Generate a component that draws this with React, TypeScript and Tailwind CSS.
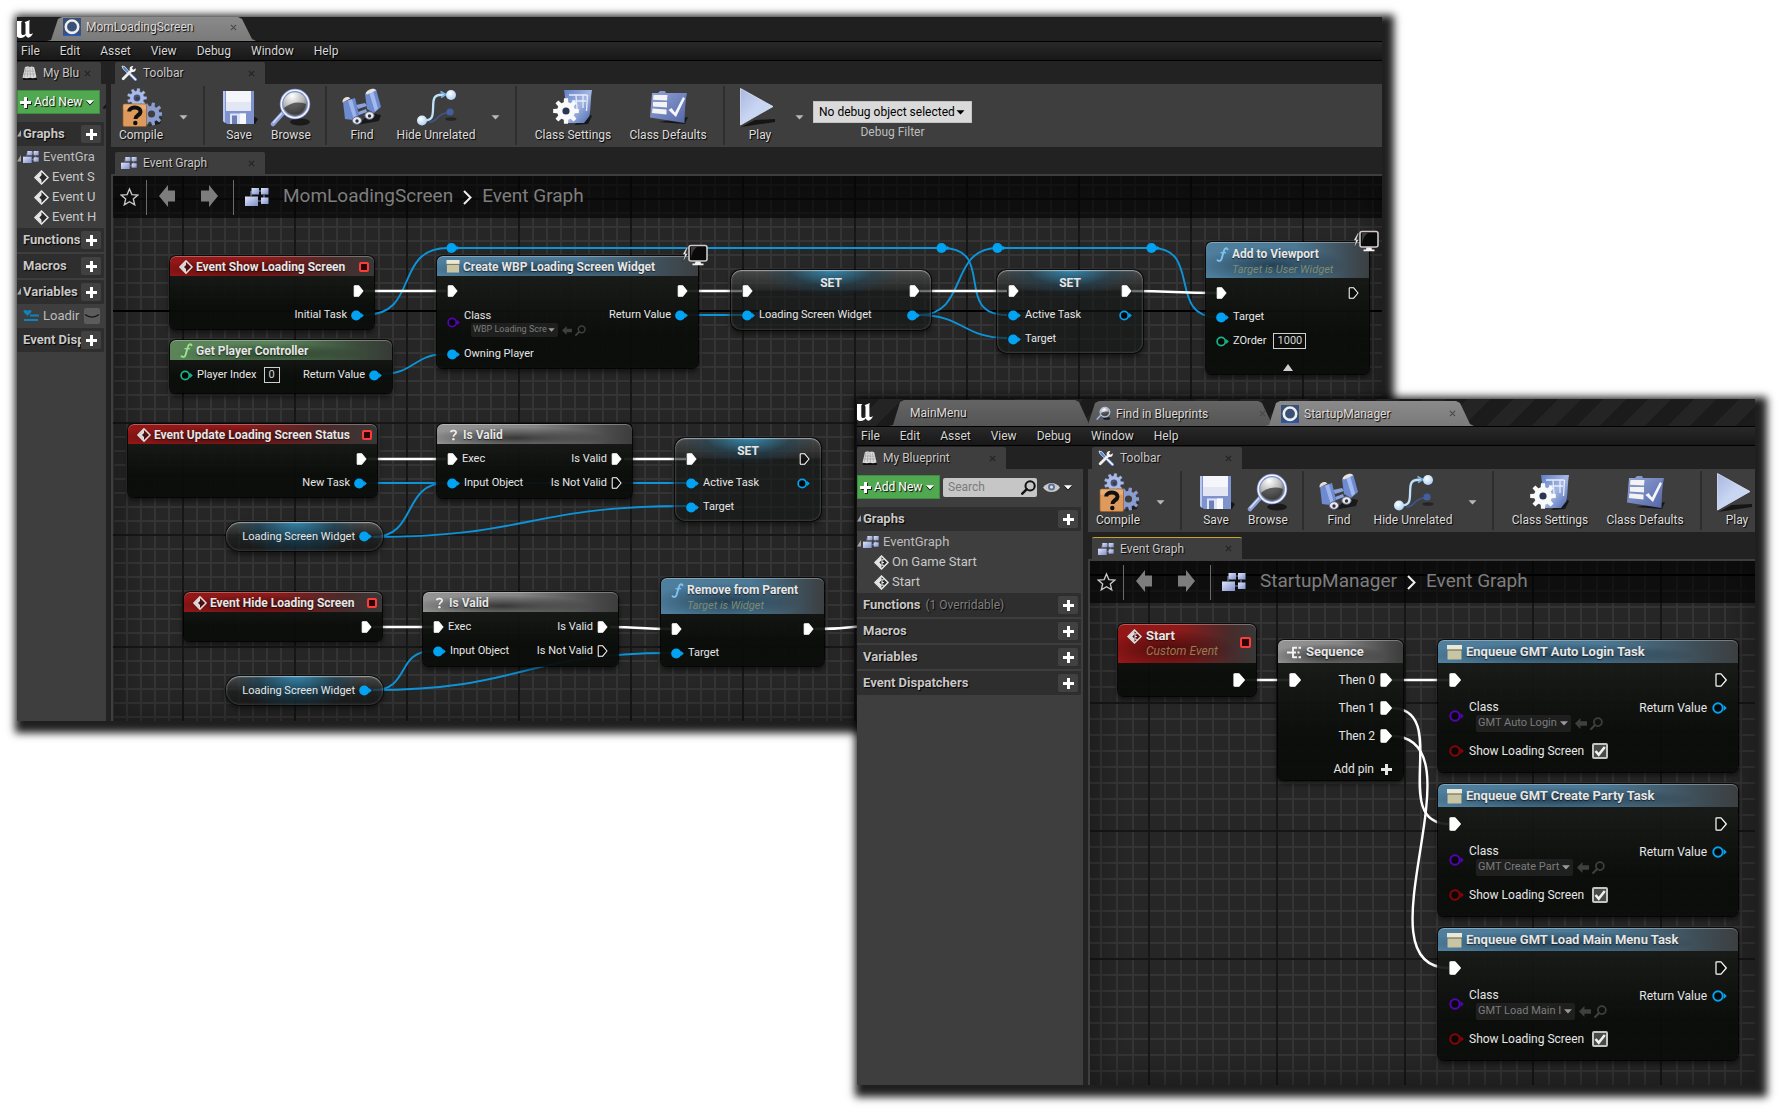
import React, { useId } from "react";

type IconProps = { className?: string };

/* ---------- small glyphs ---------- */

function UnrealMark() {
  return (
    <svg viewBox="0 0 17 19" className="h-[19px] w-[17px] shrink-0" fill="#fff" aria-hidden="true">
      <path d="M0 1h5.600c-1 .5-1.300 1-1.300 2v9.400c0 1.800.6 2.600 1.900 2.600.9 0 1.700-.4 2.300-1V4.200c0-1-.3-1.600-1.100-2L13 0c-.4.5-.6 1.300-.6 2.300v10.200c0 1.100.4 1.600 1.200 1.600.7 0 1.400-.4 2.500-1.400-1 3-2.800 4.500-5 5-1.200-.5-2-1.300-2.400-2.400-1.200 1.800-2.700 2.700-4.800 2.700-1.500 0-2.900-.5-3.900-1.500z" />
    </svg>
  );
}

function CloseGlyph({ className = "" }: IconProps) {
  return (
    <svg viewBox="0 0 8 8" className={`h-[7px] w-[7px] shrink-0 ${className}`} aria-hidden="true">
      <path d="M1 1l6 6M7 1l-6 6" stroke="currentColor" strokeWidth="1.300" />
    </svg>
  );
}

function Caret({ className = "" }: IconProps) {
  return (
    <svg viewBox="0 0 8 5" className={`shrink-0 ${className}`} aria-hidden="true">
      <path d="M0 .3h8L4 4.600z" fill="currentColor" />
    </svg>
  );
}

function Plus({ className = "" }: IconProps) {
  return (
    <svg viewBox="0 0 11 11" className={`h-[11px] w-[11px] shrink-0 ${className}`} aria-hidden="true">
      <path d="M4 0h3v4h4v3H7v4H4V7H0V4h4z" fill="currentColor" />
    </svg>
  );
}

function RingIcon() {
  return (
    <svg viewBox="0 0 18 18" className="h-[18px] w-[18px] shrink-0" aria-hidden="true">
      <rect width="18" height="18" fill="#3a5077" />
      <rect y="16.500" width="18" height="1.500" fill="#2459c9" />
      <circle cx="9" cy="8.700" r="6.200" fill="none" stroke="#eee" strokeWidth="2.600" />
    </svg>
  );
}

function BookIcon() {
  return (
    <svg viewBox="0 0 15 14" className="h-[14px] w-[15px] shrink-0" aria-hidden="true">
      <path d="M1 12h14v2H1z" fill="#111" />
      <path d="M3 1l3-.7 1.500.7L10 .5l2.200.7L14.500 11.500l-3.500.8-3-.6-3 .6-4.500-.5z" fill="#dadada" />
      <path d="M3.800 1.500L2.500 11M6 1l-.5 10M8 1.500l.5 10M10.500 1.500l1 9.500M2.500 5l10 .2M2 8h11" stroke="#9a9a9a" strokeWidth=".6" />
    </svg>
  );
}

function ToolsIcon() {
  return (
    <svg viewBox="0 0 16 16" className="h-[16px] w-[16px] shrink-0" aria-hidden="true">
      <path d="M1 1l3 .8 5 6-1.500 1.500-5.500-5.500z" fill="#4f7fd6" stroke="#fff" strokeWidth=".7" />
      <path d="M9.500 9.500l5 5" stroke="#6d98e6" strokeWidth="3" strokeLinecap="round" />
      <path d="M9.500 9.500l5 5" stroke="#fff" strokeWidth="1.500" strokeLinecap="round" />
      <path d="M2.200 13.800l7.300-7.300" stroke="#efefef" strokeWidth="2.800" strokeLinecap="round" />
      <path d="M14.800 3.200l-2.300 1.600-1.500-1.200 1.300-2.600c-2.200-.3-4 1-3.700 3.500.2 1.700 1.600 2.800 3.300 2.600 2-.2 3.200-1.700 2.900-3.900z" fill="#f4f4f4" />
    </svg>
  );
}

function GraphIcon({ className = "" }: IconProps) {
  return (
    <svg viewBox="0 0 24 20" className={`shrink-0 ${className}`} aria-hidden="true">
      <defs>
        <linearGradient id="gi" x1="0" y1="0" x2="1" y2="1">
          <stop offset="0" stopColor="#dfe6fb" />
          <stop offset="1" stopColor="#7f8fcb" />
        </linearGradient>
      </defs>
      <path d="M6 9V4M16 4h-3M19 8v5M13 14h4" stroke="#7a86b5" strokeWidth="1.200" fill="none" />
      <rect x="6.500" y="1" width="7.500" height="6.500" fill="url(#gi)" />
      <rect x="16" y="1" width="7.500" height="6.500" fill="url(#gi)" />
      <rect x="0" y="9.500" width="13" height="9.500" fill="url(#gi)" />
      <rect x="16" y="10.500" width="7.500" height="6.500" fill="url(#gi)" />
    </svg>
  );
}

function EventDiamond({ custom = false, size = "h-[14px] w-[14px]", tint = "#ddd" }: { custom?: boolean; size?: string; tint?: string }) {
  return (
    <svg viewBox="0 0 14 14" className={`shrink-0 ${size}`} aria-hidden="true">
      <path d="M7 .9L13.100 7 7 13.100.9 7z" fill="rgba(0,0,0,.35)" stroke={tint} strokeWidth="1.500" strokeLinejoin="round" />
      <path d="M7 1.500v3.500L5 7l2 2v3.500L1.500 7z" fill={tint} />
      {custom && <path d="M9.500 4.500H7.500v5h2M7.500 7h1.800" fill="none" stroke={tint} strokeWidth="1" />}
    </svg>
  );
}

function ClassBox({ className = "" }: IconProps) {
  return (
    <svg viewBox="0 0 15 15" className={`shrink-0 ${className}`} aria-hidden="true">
      <rect x="0" y="0" width="15" height="5" fill="#ebe8d3" />
      <rect x="0" y="4.500" width="15" height="1" fill="#5d5a48" />
      <rect x=".5" y="5.500" width="14" height="9" fill="#c9c4a2" />
    </svg>
  );
}

function FuncGlyph({ color }: { color: string }) {
  return (
    <svg viewBox="0 0 13 15" className="h-[15px] w-[13px] shrink-0" aria-hidden="true">
      <path d="M11.500 2.200C10.500.6 8.600 1 8 3.400L5.600 11.800C5 14 3.200 14.500 1.600 13.200" fill="none" stroke={color} strokeWidth="1.900" strokeLinecap="round" />
      <path d="M4.500 5.700h5.600" stroke={color} strokeWidth="1.300" />
    </svg>
  );
}

function QuestionGlyph() {
  return (
    <svg viewBox="0 0 9 13" className="h-[12px] w-[9px] shrink-0" aria-hidden="true">
      <path d="M1.500 3.600C1.600 1 7.400 1 7.300 3.900 7.200 5.900 4.400 5.800 4.400 8.300" fill="none" stroke="#eee" strokeWidth="1.900" />
      <circle cx="4.400" cy="11" r="1.300" fill="#eee" />
    </svg>
  );
}

function SequenceGlyph() {
  return (
    <svg viewBox="0 0 15 13" className="h-[13px] w-[15px] shrink-0" aria-hidden="true">
      <path d="M0 6.500h6M6 1v11M6 1.800h4M6 6.500h3M6 11.200h4M11.500 1.800H14M10.500 6.500h2M11.500 11.200H14" stroke="#f2f2f2" strokeWidth="1.900" fill="none" />
    </svg>
  );
}

function UseArrow({ className = "" }: IconProps) {
  return (
    <svg viewBox="0 0 11 10" className={`shrink-0 ${className}`} aria-hidden="true">
      <path d="M5 0v3h6v4H5v3L0 5z" fill="#3e3f3e" />
    </svg>
  );
}

function Loupe({ color, className = "" }: { color: string; className?: string }) {
  return (
    <svg viewBox="0 0 14 14" className={`shrink-0 ${className}`} aria-hidden="true">
      <circle cx="8.500" cy="5.500" r="4.300" fill="none" stroke={color} strokeWidth="1.900" />
      <path d="M5.400 8.600L1.200 12.800" stroke={color} strokeWidth="2.300" strokeLinecap="round" />
    </svg>
  );
}

function MonitorBadge() {
  return (
    <svg viewBox="0 0 26 22" className="absolute -top-[12px] -right-[10px] h-[22px] w-[26px]" aria-hidden="true">
      <path d="M4.800 3L.6 10.500h2.200L1 18l4.800-8.500H3.600L5.800 3z" fill="#eee" stroke="#111" strokeWidth=".4" />
      <rect x="7" y="1.500" width="18" height="15.500" rx="2" fill="#0a0a0a" stroke="#d2c8ca" strokeWidth="1.600" />
      <path d="M9 15c.5-6 3-10 6-12h-6z" fill="#3a3a3a" />
      <path d="M13.500 17.500h5l.5 2h2.500v1.800h-11v-1.800H13z" fill="#f3f3f3" />
    </svg>
  );
}

/* ---------- toolbar drawings ---------- */

function gear(cx: number, cy: number, inner: number, outer: number, teeth: number) {
  const pts: string[] = [];
  const step = (Math.PI * 2) / teeth;
  for (let i = 0; i < teeth; i++) {
    const a = i * step;
    const at = (r: number, t: number) => `${(cx + r * Math.cos(t)).toFixed(2)} ${(cy + r * Math.sin(t)).toFixed(2)}`;
    pts.push(at(inner, a - step * 0.32), at(outer, a - step * 0.2), at(outer, a + step * 0.2), at(inner, a + step * 0.32));
  }
  return `M${pts.join("L")}Z`;
}

const ICON = "h-[40px] w-[42px] shrink-0";

function CompileIcon() {
  return (
    <svg viewBox="0 0 42 40" className={ICON} aria-hidden="true">
      <path d="M28 38l12-2 2-7z" fill="#1d1d1d" />
      <path d={gear(31.5, 26, 8, 11.5, 9)} fill="#8b9cd0" />
      <circle cx="31.500" cy="26" r="3.600" fill="#3e3e3e" />
      <path d={gear(17, 10, 7, 9.8, 9)} fill="#a9bbe6" stroke="#7688c0" strokeWidth=".4" />
      <circle cx="17" cy="10" r="3.400" fill="#46527c" />
      <circle cx="17.500" cy="10.500" r="1.800" fill="#3e3e3e" />
      <rect x="3" y="16" width="23.500" height="22.500" rx="1.500" fill="#dd9a5c" stroke="#9a5f26" strokeWidth=".7" />
      <path d="M3.500 16.500h22.500v5H3.500z" fill="#ecbb88" opacity=".6" />
      <path d="M9.200 23.500c.2-5.500 11.600-5.500 11.300.4-.2 3.500-5 3.300-5 7" fill="none" stroke="#101010" strokeWidth="4" />
      <circle cx="15.300" cy="35" r="2.200" fill="#101010" />
    </svg>
  );
}

function SaveIcon() {
  return (
    <svg viewBox="0 0 42 40" className={ICON} aria-hidden="true">
      <path d="M8 36h29l3-5-3-2z" fill="#161616" />
      <path d="M5 3h31v33H9l-4-3z" fill="#7f93cf" />
      <path d="M5 3h2v32l-2-2z" fill="#b8c6ee" />
      <path d="M8 3h25v20H8z" fill="#f4f6fb" />
      <path d="M8 14h25v9H8z" fill="#e2e7f3" />
      <path d="M12 25.500h16V36H12z" fill="#dde4f5" />
      <path d="M14 27.500h5V36h-5z" fill="#6d7fb9" />
      <path d="M22 25.500h6V36h-6z" fill="#f8f9fd" />
    </svg>
  );
}

function Magnifier({ className }: { className: string }) {
  return (
    <svg viewBox="0 0 42 40" className={className} aria-hidden="true">
      <defs>
        <radialGradient id="lens" cx=".4" cy=".2" r=".8">
          <stop offset="0" stopColor="#fff" />
          <stop offset=".55" stopColor="#b5b5b5" />
          <stop offset="1" stopColor="#3b3b3b" />
        </radialGradient>
      </defs>
      <ellipse cx="30" cy="34" rx="10" ry="3.500" fill="#1a1a1a" />
      <path d="M13 25L3 36" stroke="#8da0d8" strokeWidth="4.500" strokeLinecap="round" />
      <path d="M12 25L3 35" stroke="#d9e2fa" strokeWidth="1.300" />
      <circle cx="25" cy="16" r="13.500" fill="url(#lens)" stroke="#7d91c9" strokeWidth="3.500" />
      <circle cx="25" cy="16" r="13.700" fill="none" stroke="#f1f4fc" strokeWidth="1.600" />
      <path d="M14 20c6-5 14-7 22-4-1 6-5 10.500-11 10.500-5 0-9-2.500-11-6.500z" fill="#2e2e2e" opacity=".7" />
    </svg>
  );
}

function FindIcon() {
  return (
    <svg viewBox="0 0 42 40" className={ICON} aria-hidden="true">
      <path d="M16 37l22-4 2-6-10-2z" fill="#191919" />
      <path d="M15 17l9-2 2 3-9 3zM17 24l8-3 1 3-8 3z" fill="#8aa2dc" />
      <path d="M2 14l12-4 4 17-6 5-8-1z" fill="#6e8bd0" />
      <path d="M7 12.500l4-1.300 4.500 17-3 2z" fill="#9db5ec" />
      <path d="M24 6l11-5 5 18-7 6-7-4z" fill="#6e8bd0" />
      <path d="M28 4.500l4-2 5 18-3 3z" fill="#a3baf0" />
      <path d="M1.500 13.500c0-3 3-5 6-4.500l2 1.500-8 4z" fill="#e4ddd8" />
      <path d="M24.500 5.500c1-3 6-5.500 9-4.500l1.500 1.500-9 4z" fill="#eae4de" />
      <ellipse cx="16" cy="32.500" rx="4.600" ry="3.800" fill="#e8e8ee" stroke="#5b6590" strokeWidth="1" />
      <ellipse cx="28.500" cy="27.500" rx="4.600" ry="3.800" fill="#e8e8ee" stroke="#5b6590" strokeWidth="1" />
      <circle cx="16" cy="33" r="1.700" fill="#333" />
      <circle cx="28.500" cy="28" r="1.700" fill="#333" />
    </svg>
  );
}

function HideIcon() {
  return (
    <svg viewBox="0 0 42 40" className={ICON} aria-hidden="true">
      <defs>
        <radialGradient id="ball" cx=".4" cy=".35" r=".7">
          <stop offset="0" stopColor="#fff" />
          <stop offset="1" stopColor="#a9cdf2" />
        </radialGradient>
      </defs>
      <ellipse cx="36" cy="31" rx="5.500" ry="1.800" fill="#242424" />
      <path d="M14 34c9 1 7-9 19-9" fill="none" stroke="#40568a" strokeWidth="1.600" />
      <circle cx="35" cy="24" r="3.600" fill="#425f9f" />
      <path d="M7 32.500c14 1 10-8 11.500-19.500C19.300 7.500 22 7 29 6.500" fill="none" stroke="#bfe0fa" strokeWidth="2.300" />
      <path d="M25.500 3.500l5.500 3L26 9.500" fill="none" stroke="#76b6ea" strokeWidth="1.500" />
      <circle cx="36" cy="7" r="5" fill="url(#ball)" />
      <circle cx="7" cy="32.500" r="5" fill="url(#ball)" />
    </svg>
  );
}

function ClassSettingsIcon() {
  return (
    <svg viewBox="0 0 42 40" className={ICON} aria-hidden="true">
      <defs>
        <linearGradient id="cs" x1="0" y1="0" x2="1" y2="1">
          <stop offset="0" stopColor="#5f7fc4" />
          <stop offset=".5" stopColor="#a5b6e2" />
          <stop offset="1" stopColor="#4566ae" />
        </linearGradient>
      </defs>
      <path d="M22 37l14-1 4-8-3-2z" fill="#171717" />
      <path d="M12 2h28c-1.500 8-1 16-2.500 26L32 35H16c-2-10-2-21-4-33z" fill="url(#cs)" />
      <path d="M17 7h18M20 13h14M24 7l1 14M31 7v13M35.500 7l-1 16" stroke="#e6edfb" strokeWidth="1.300" fill="none" />
      <path d={gear(14, 23, 9, 13, 8)} fill="#f8f9fb" />
      <circle cx="14" cy="23" r="3.600" fill="#2b3553" />
    </svg>
  );
}

function ClassDefaultsIcon() {
  return (
    <svg viewBox="0 0 42 40" className={ICON} aria-hidden="true">
      <defs>
        <linearGradient id="cd" x1="0" y1="0" x2="1" y2="1">
          <stop offset="0" stopColor="#93a5d8" />
          <stop offset="1" stopColor="#5465a6" />
        </linearGradient>
      </defs>
      <path d="M12 34l26 2 3-7z" fill="#171717" />
      <path d="M5 5h6l2-2h5l1 2h21c-2 9-2 18-2.500 30L3 29.500z" fill="url(#cd)" />
      <path d="M6.500 7h14l-.5 5.500-14-.8zM6 14h14v5.500L6 18.500zM5.500 20.500l14 1v5L5 25z" fill="#f3f3f3" />
      <path d="M21.500 22l3-2 3.500 4.500L36 9l2 1.500L29 29z" fill="#f5f6fb" />
    </svg>
  );
}

function PlayIcon() {
  return (
    <svg viewBox="0 0 42 40" className={ICON} aria-hidden="true">
      <defs>
        <linearGradient id="pl" x1="0" y1="0" x2="1" y2="1">
          <stop offset="0" stopColor="#a9b6e0" />
          <stop offset=".5" stopColor="#c9d5f2" />
          <stop offset="1" stopColor="#c6dff0" />
        </linearGradient>
      </defs>
      <path d="M2 39l34-5v-3l-20 1z" fill="#151515" />
      <path d="M1.500.5L34 18.500 1.500 37z" fill="url(#pl)" stroke="#dfe8fb" strokeWidth=".8" />
    </svg>
  );
}

/* ---------- window chrome ---------- */

const SHADOW = "[text-shadow:1px_1px_1px_#000]";

function WindowTab({ label, icon, active = false, closable = true, className }: { label: string; icon?: React.ReactNode; active?: boolean; closable?: boolean; className: string }) {
  return (
    <div
      className={`flex items-center self-end [clip-path:polygon(0_100%,4px_96%,11px_8%,15px_0,calc(100%_-_18px)_0,calc(100%_-_14px)_8%,calc(100%_-_4px)_92%,100%_100%)] ${active ? "bg-linear-to-b from-[#8a8a8a] to-[#7a7a7a]" : "bg-linear-to-b from-[#646464] to-[#555555]"} ${className}`}
    >
      {icon}
      <span className={`ml-[5px] flex-1 text-[12px] leading-4 text-[#dcdcdc] ${SHADOW}`}>{label}</span>
      {closable && (
        <button type="button" aria-label={`Close ${label}`} className="text-[#4a4a4a]">
          <CloseGlyph />
        </button>
      )}
    </div>
  );
}

function MenuBar() {
  return (
    <nav className="flex h-[20px] shrink-0 items-center gap-5 border-y border-black bg-linear-to-b from-[#292929] to-[#181818] pl-1 text-[12px] text-[#d6d6d6]">
      {["File", "Edit", "Asset", "View", "Debug", "Window", "Help"].map((m) => (
        <button key={m} type="button" className={SHADOW}>
          {m}
        </button>
      ))}
    </nav>
  );
}

function PanelTab({ icon, label, className, highlight = false }: { icon: React.ReactNode; label: string; className: string; highlight?: boolean }) {
  return (
    <div className={`flex h-[22px] items-center rounded-t-[2px] bg-[#3e3e3e] pr-[10px] ${highlight ? "border-t border-[#c8a51c]" : ""} ${className}`}>
      {icon}
      <span className={`flex-1 pl-[6px] text-[12px] whitespace-nowrap text-[#c9c9c9] ${SHADOW}`}>{label}</span>
      <button type="button" aria-label={`Close ${label}`} className="text-[#232323]">
        <CloseGlyph />
      </button>
    </div>
  );
}

function SectionHeader({ label, note, open = false }: { label: string; note?: string; open?: boolean }) {
  return (
    <div className="relative flex h-[24px] shrink-0 items-center bg-[#2e2e2e] pr-[3px] pl-[6px]">
      {open && <OpenMark />}
      <h2 className={`min-w-0 flex-1 overflow-hidden text-[13px] font-bold whitespace-nowrap text-[#c8c8c8] ${SHADOW}`}>
        {label}
        {note && <span className="ml-[5px] text-[12px] font-normal text-[#7f7f7f]">{note}</span>}
      </h2>
      <button type="button" aria-label={`Add to ${label}`} className="flex h-[18px] w-[20px] shrink-0 items-center justify-center rounded-[2px] bg-[#414141] text-white">
        <Plus />
      </button>
    </div>
  );
}

function OpenMark() {
  return (
    <svg viewBox="0 0 5 7" className="absolute top-[8px] left-0 h-[7px] w-[5px]" aria-hidden="true">
      <path d="M4 0v6.500H0z" fill="#a5a5a5" />
    </svg>
  );
}

function AddNewButton() {
  return (
    <button type="button" className="flex h-[24px] w-[83px] shrink-0 items-center border border-[#3d8b3d] bg-[#50a850] pl-[2px] text-white">
      <Plus className="drop-shadow-[1px_1px_0_#222]" />
      <span className={`ml-[3px] text-[12px] whitespace-nowrap ${SHADOW}`}>Add New</span>
      <Caret className="ml-[4px] h-[5px] w-[8px] drop-shadow-[0_1px_0_#000]" />
    </button>
  );
}

function TreeRoot({ label }: { label: string }) {
  return (
    <div className="relative flex h-[20px] items-center pl-[6px] text-[13px] text-[#bdbdbd]">
      <OpenMark />
      <GraphIcon className="h-[14px] w-[16px]" />
      <span className="ml-[4px] whitespace-nowrap">{label}</span>
    </div>
  );
}

function TreeLeaf({ label, custom }: { label: string; custom?: boolean }) {
  return (
    <div className="flex h-[20px] items-center pl-[17px] text-[13px] text-[#c9c9c9]">
      <EventDiamond custom={custom} size="h-[15px] w-[15px]" tint="#e6e6e6" />
      <span className="ml-[3px] whitespace-nowrap">{label}</span>
    </div>
  );
}

function ToolButton({ icon, label, className }: { icon: React.ReactNode; label: string; className: string }) {
  return (
    <button type="button" className={`flex shrink-0 flex-col items-center ${className}`}>
      {icon}
      <span className={`text-[12px] leading-[14px] whitespace-nowrap text-[#dcdcdc] ${SHADOW}`}>{label}</span>
    </button>
  );
}

function ToolMenu({ label }: { label: string }) {
  return (
    <button type="button" aria-label={label} className="flex w-6 shrink-0 items-center justify-center pt-1 text-[#b9b9b9]">
      <Caret className="h-[5px] w-[9px]" />
    </button>
  );
}

function ToolSeparator() {
  return <div className="mx-2 my-[-2px] w-[2px] shrink-0 bg-[#2d2d2d]" />;
}

function DebugFilter() {
  const id = useId();
  return (
    <>
      <ToolMenu label="Play options" />
      <div className="ml-[2px] flex shrink-0 flex-col items-center pt-[13px]">
        <div className="relative flex items-center">
          <select id={id} className="h-[22px] w-[159px] appearance-none border border-[#c4c4c4] bg-[#dadada] pl-[5px] text-[12px] text-black">
            <option>No debug object selected</option>
          </select>
          <Caret className="pointer-events-none absolute right-[7px] h-[5px] w-[9px] text-black" />
        </div>
        <label htmlFor={id} className="text-[12px] leading-[18px] text-[#bdbdbd]">
          Debug Filter
        </label>
      </div>
    </>
  );
}

function Toolbar({ debug }: { debug?: boolean }) {
  return (
    <div className="flex h-[63px] shrink-0 overflow-hidden bg-[#3e3e3e] py-1">
      <ToolButton icon={<CompileIcon />} label="Compile" className="w-[60px]" />
      <ToolMenu label="Compile options" />
      <ToolSeparator />
      <ToolButton icon={<SaveIcon />} label="Save" className="w-[52px]" />
      <ToolButton icon={<Magnifier className={ICON} />} label="Browse" className="w-[52px]" />
      <ToolSeparator />
      <ToolButton icon={<FindIcon />} label="Find" className="w-[54px]" />
      <ToolButton icon={<HideIcon />} label="Hide Unrelated" className="w-[94px]" />
      <ToolMenu label="Hide unrelated options" />
      <ToolSeparator />
      <ToolButton icon={<ClassSettingsIcon />} label="Class Settings" className="w-[96px]" />
      <ToolButton icon={<ClassDefaultsIcon />} label="Class Defaults" className="w-[94px]" />
      <ToolSeparator />
      <ToolButton icon={<PlayIcon />} label="Play" className="w-[54px]" />
      {debug && <DebugFilter />}
    </div>
  );
}

function Breadcrumb({ asset }: { asset: string }) {
  return (
    <div className="relative flex h-[42px] items-center bg-black/60 pl-[7px] whitespace-nowrap">
      <button type="button" aria-label="Favorite">
        <svg viewBox="0 0 20 20" className="h-[20px] w-[19px]" aria-hidden="true">
          <path d="M10 1.500l2.500 6 6.300.5-4.800 4.100 1.500 6.200L10 15l-5.500 3.300L6 12.100 1.200 8l6.300-.5z" fill="none" stroke="#c9c9c9" strokeWidth="1.400" />
        </svg>
      </button>
      <div className="ml-[7px] h-[35px] w-px bg-[#6a6a6a]" />
      <button type="button" aria-label="Back" className="ml-[12px] pb-[2px]">
        <svg viewBox="0 0 17 22" className="h-[22px] w-[17px]" aria-hidden="true">
          <path d="M0 11L9 0v5.500h7v11H9V22z" fill="#7d7d7d" />
        </svg>
      </button>
      <button type="button" aria-label="Forward" className="ml-[25px] pb-[2px]">
        <svg viewBox="0 0 17 22" className="h-[22px] w-[17px]" aria-hidden="true">
          <path d="M17 11L8 0v5.500H0v11h8V22z" fill="#7d7d7d" />
        </svg>
      </button>
      <div className="ml-[15px] h-[35px] w-px bg-[#6a6a6a]" />
      <GraphIcon className="ml-[11px] h-[20px] w-[24px]" />
      <span className="ml-[14px] pb-[2px] text-[19px] leading-6 text-[#7e7e7e]">{asset}</span>
      <svg viewBox="0 0 9 15" className="ml-[10px] h-[15px] w-[9px]" aria-hidden="true">
        <path d="M1 1l6.500 6.500L1 14" fill="none" stroke="#eee" strokeWidth="2" />
      </svg>
      <span className="ml-[10px] pb-[2px] text-[19px] leading-6 text-[#7e7e7e]">Event Graph</span>
    </div>
  );
}

/* ---------- graph canvas ---------- */

type Wire = { from: [number, number]; to: [number, number]; bend?: number; exec?: boolean };

function Wires({ wires }: { wires: Wire[] }) {
  return (
    <svg className="absolute inset-0 h-full w-full" aria-hidden="true">
      {wires.map(({ from: [x1, y1], to: [x2, y2], bend, exec }) => {
        const k = bend ?? (x2 - x1) * 0.5;
        return (
          <path
            key={`${x1},${y1},${x2},${y2}`}
            d={`M${x1} ${y1}C${x1 + k} ${y1} ${x2 - k} ${y2} ${x2} ${y2}`}
            fill="none"
            stroke={exec ? "#ffffff" : "#0d93d8"}
            strokeWidth={exec ? 2.4 : 1.9}
          />
        );
      })}
    </svg>
  );
}

function Reroute({ x, y }: { x: number; y: number }) {
  return (
    <svg viewBox="0 0 14 12" className="absolute h-[12px] w-[14px]" style={{ left: x - 6, top: y - 6 }} aria-hidden="true">
      <circle cx="5.500" cy="6" r="5" fill="#02a3f2" />
      <path d="M10.500 3.500L13.500 6l-3 2.500z" fill="#02a3f2" />
    </svg>
  );
}

function ExecPin({ big, filled }: { big?: boolean; filled: boolean }) {
  return (
    <svg viewBox="0 0 12 14" className={`shrink-0 ${big ? "h-[14px] w-[12px]" : "h-[12px] w-[11px]"}`} aria-hidden="true">
      <path d="M1 1.600Q1 .8 1.800.8H6L11.300 7 6 13.200H1.800Q1 13.200 1 12.400z" fill={filled ? "#fff" : "rgba(0,0,0,.4)"} stroke="#fff" strokeWidth="1.200" strokeLinejoin="round" />
    </svg>
  );
}

function DataPin({ big, filled, color }: { big?: boolean; filled: boolean; color: string }) {
  return (
    <svg viewBox="0 0 15 12" className={`shrink-0 ${big ? "h-[12px] w-[15px]" : "h-[11px] w-[13px]"}`} aria-hidden="true">
      <circle cx="6" cy="6" r={filled ? 5.8 : 4.7} fill={filled ? color : "#070707"} stroke={color} strokeWidth={filled ? 0 : 2} />
      <path d="M11.600 3L14.800 6l-3.200 3z" fill={color} />
    </svg>
  );
}

const BLUE = "#02a3f2";
const GREEN = "#19b487";
const PURPLE = "#5404b5";
const RED = "#8c0404";

type Pin = { kind: "exec" | "data"; label?: string; filled?: boolean; color?: string; value?: string; check?: boolean; asset?: string };

function PinMark({ pin, big }: { pin: Pin; big?: boolean }) {
  return pin.kind === "exec" ? <ExecPin big={big} filled={!!pin.filled} /> : <DataPin big={big} filled={!!pin.filled} color={pin.color ?? BLUE} />;
}

function InputPin({ pin, big }: { pin: Pin; big?: boolean }) {
  const id = useId();
  const text = big ? "text-[12px]" : "pt-px text-[11px]";
  if (pin.asset) {
    return (
      <div className={`flex items-center ${big ? "h-[43px] gap-[5px]" : "h-[39px] gap-[4px]"}`}>
        <PinMark pin={pin} big={big} />
        <div className="flex flex-col">
          <label htmlFor={id} className={`${text} ${big ? "leading-4" : "leading-[14px]"}`}>
            {pin.label}
          </label>
          <div className="ml-[7px] flex items-center">
            <div className="relative flex items-center">
              <select
                id={id}
                className={`appearance-none rounded-[2px] bg-[#1e1f1e] pl-[2px] text-[#7c7c7c] ${big ? "h-[17px] pr-[13px] text-[11px]" : "h-[14px] pr-[11px] text-[9px]"}`}
              >
                <option>{pin.asset}</option>
              </select>
              <Caret className={`pointer-events-none absolute right-[3px] text-[#9a9a9a] ${big ? "h-[5px] w-[8px]" : "h-[4px] w-[7px]"}`} />
            </div>
            <button type="button" aria-label="Use selected asset" className="ml-[4px]">
              <UseArrow className={big ? "h-[11px] w-[12px]" : "h-[9px] w-[10px]"} />
            </button>
            <button type="button" aria-label="Browse to asset" className="ml-[3px]">
              <Loupe color="#3e3f3e" className={big ? "h-[13px] w-[13px]" : "h-[11px] w-[11px]"} />
            </button>
          </div>
        </div>
      </div>
    );
  }
  return (
    <div className={`flex items-center ${big ? "h-[28px] gap-[5px]" : "h-[24px] gap-[4px]"}`}>
      <PinMark pin={pin} big={big} />
      {pin.value !== undefined || pin.check ? (
        <label htmlFor={id} className={`${text} whitespace-nowrap`}>
          {pin.label}
        </label>
      ) : (
        <span className={`${text} whitespace-nowrap`}>{pin.label}</span>
      )}
      {pin.value !== undefined && (
        <input
          id={id}
          type="text"
          defaultValue={pin.value}
          className={`ml-[3px] h-[16px] border border-[#cfcfcf] bg-transparent text-center text-[11px] text-[#d5d5d5] ${pin.value.length > 1 ? "w-[33px]" : "w-[16px]"}`}
        />
      )}
      {pin.check && (
        <span className="relative ml-[3px] flex">
          <input id={id} type="checkbox" defaultChecked className="h-4 w-4 appearance-none rounded-[2px] border-2 border-[#c4c4c4] bg-[#4a4a4a]" />
          <svg viewBox="0 0 16 16" className="pointer-events-none absolute inset-0 h-4 w-4" aria-hidden="true">
            <path d="M3.500 8l3.200 3.700L12.800 4" fill="none" stroke="#f0f0f0" strokeWidth="2.600" />
          </svg>
        </span>
      )}
    </div>
  );
}

function OutputPin({ pin, big }: { pin: Pin; big?: boolean }) {
  return (
    <div className={`flex items-center justify-end whitespace-nowrap ${big ? "h-[28px] gap-[5px] text-[12px]" : "h-[24px] gap-[4px] text-[11px]"}`}>
      {pin.label && <span className={big ? "" : "pt-px"}>{pin.label}</span>}
      <PinMark pin={pin} big={big} />
    </div>
  );
}

const TONES = {
  event:
    "bg-[radial-gradient(ellipse_at_38%_65%,rgba(20,0,0,0.55),transparent_55%),linear-gradient(90deg,#941717_0%,#8f1a1a_45%,#4a2a2a_80%,#383838_100%)]",
  pure: "bg-[radial-gradient(ellipse_at_45%_70%,rgba(0,15,0,0.5),transparent_55%),linear-gradient(90deg,#5b8558_0%,#58805a_50%,#3c4b3b_85%,#363a36_100%)]",
  call: "bg-[radial-gradient(ellipse_at_40%_65%,rgba(0,10,20,0.5),transparent_55%),linear-gradient(90deg,#4f7f9e_0%,#4b7894_55%,#3e4c55_88%,#3c3f41_100%)]",
  flow: "bg-[radial-gradient(ellipse_at_40%_70%,rgba(0,0,0,0.6),transparent_55%),linear-gradient(90deg,#949494_0%,#858585_50%,#4a4a4a_88%,#3d3d3d_100%)]",
};

type NodeProps = {
  x: number;
  y: number;
  width: number;
  height: number;
  tone: keyof typeof TONES;
  icon: React.ReactNode;
  title: string;
  subtitle?: string;
  inputs?: Pin[];
  outputs?: Pin[];
  big?: boolean;
  delegate?: boolean;
  badge?: boolean;
  footer?: React.ReactNode;
};

function GraphNode({ x, y, width, height, tone, icon, title, subtitle, inputs = [], outputs = [], big, delegate, badge, footer }: NodeProps) {
  const headerHeight = subtitle ? (big ? "h-[39px] pt-[4px]" : "h-[36px] pt-[4px]") : big ? "h-[23px] pt-px" : "h-[20px] pt-px";
  const subColor = tone === "event" ? "text-[#9a7a52]" : "text-[#7d8c74]";
  return (
    <article
      className="absolute rounded-[6px] bg-linear-to-b from-[#1c1f1c]/92 to-[#0a0c0a]/94 to-70% text-[#e6e6e6] shadow-[0_0_0_1px_rgba(0,0,0,0.75),0_3px_5px_1px_rgba(0,0,0,0.5)]"
      style={{ left: x, top: y, width, height }}
    >
      <header className={`flex rounded-t-[6px] shadow-[inset_0_1px_0_rgba(255,255,255,0.3)] ${TONES[tone]} ${headerHeight} ${subtitle ? "items-start" : "items-center"} pl-[9px]`}>
        <span className={`flex h-4 shrink-0 items-center justify-center ${big ? "w-[15px]" : "w-[14px]"}`}>{icon}</span>
        <div className={big ? "ml-[4px]" : "ml-[3px]"}>
          <h3 className={`leading-4 font-bold whitespace-nowrap [text-shadow:0_1px_1px_rgba(0,0,0,0.6)] ${big ? "text-[13px]" : "text-[12px]"}`}>{title}</h3>
          {subtitle && <p className={`leading-[15px] whitespace-nowrap italic ${subColor} ${big ? "text-[12px]" : "text-[11px]"}`}>{subtitle}</p>}
        </div>
        {delegate && (
          <span
            className={`mr-[5px] ml-auto shrink-0 rounded-[2px] border-2 border-[#ff3a3a] bg-[#2a0303] ${big ? "mt-[9px] h-[11px] w-[11px]" : "h-[10px] w-[10px]"}`}
          />
        )}
      </header>
      <div className={`flex justify-between pt-[3px] ${big ? "px-[11px]" : "px-[10px]"}`}>
        <div>
          {inputs.map((p, i) => (
            <InputPin key={i} pin={p} big={big} />
          ))}
        </div>
        <div>
          {outputs.map((p, i) => (
            <OutputPin key={i} pin={p} big={big} />
          ))}
        </div>
      </div>
      {footer}
      {badge && <MonitorBadge />}
    </article>
  );
}

const GLASS =
  "absolute shadow-[0_0_0_1px_rgba(0,0,0,0.7),inset_0_1px_1px_rgba(255,255,255,0.45),inset_0_0_2px_1px_rgba(255,255,255,0.12),0_3px_5px_1px_rgba(0,0,0,0.45)] text-[#e6e6e6]";

function SetNode({ x, y, width, height, inputs, outputs }: { x: number; y: number; width: number; height: number; inputs: Pin[]; outputs: Pin[] }) {
  return (
    <article
      className={`${GLASS} rounded-[10px] bg-[#141515]/60 bg-[radial-gradient(ellipse_70px_26px_at_50%_0,rgba(48,150,196,0.8),rgba(20,70,95,0.4)_60%,transparent),linear-gradient(180deg,rgba(140,140,140,0.4),rgba(60,60,60,0.35)_20px,transparent_21px)] bg-no-repeat`}
      style={{ left: x, top: y, width, height }}
    >
      <h3 className="absolute inset-x-0 top-[5px] text-center text-[12px] leading-4 font-bold">SET</h3>
      <div className="flex justify-between px-[11px] pt-[9px]">
        <div>
          {inputs.map((p, i) => (
            <InputPin key={i} pin={p} />
          ))}
        </div>
        <div>
          {outputs.map((p, i) => (
            <OutputPin key={i} pin={p} />
          ))}
        </div>
      </div>
    </article>
  );
}

function GetNode({ x, y, label }: { x: number; y: number; label: string }) {
  return (
    <article
      className={`${GLASS} flex h-[29px] w-[157px] items-center justify-end rounded-[14px] bg-[#141515]/60 bg-[radial-gradient(ellipse_65px_34px_at_45%_0,rgba(48,140,184,0.85),rgba(20,70,95,0.55)_60%,transparent),linear-gradient(180deg,rgba(140,140,140,0.4),rgba(40,40,40,0.3)_16px,rgba(20,20,20,0.4))] pr-[11px]`}
      style={{ left: x, top: y }}
    >
      <OutputPin pin={{ kind: "data", label, filled: true }} />
    </article>
  );
}

const execIn: Pin = { kind: "exec", filled: true };
const execOpen: Pin = { kind: "exec" };
const data = (label?: string, filled = true, color = BLUE): Pin => ({ kind: "data", label, filled, color });

const isValidInputs: Pin[] = [{ kind: "exec", label: "Exec", filled: true }, data("Input Object")];
const isValidOutputs: Pin[] = [
  { kind: "exec", label: "Is Valid", filled: true },
  { kind: "exec", label: "Is Not Valid" },
];

const loadingWires: Wire[] = [
  { from: [252, 139], to: [335, 72], bend: 55 },
  { from: [339, 72], to: [829, 72] },
  { from: [829, 72], to: [894, 139], bend: 55 },
  { from: [806, 139], to: [885, 72], bend: 50 },
  { from: [806, 139], to: [894, 162] },
  { from: [885, 72], to: [1039, 72] },
  { from: [1039, 72], to: [1104, 141], bend: 50 },
  { from: [269, 198], to: [333, 178] },
  { from: [573, 139], to: [629, 139] },
  { from: [254, 307], to: [573, 307] },
  { from: [260, 361], to: [333, 307], bend: 45 },
  { from: [260, 361], to: [573, 330] },
  { from: [260, 514], to: [320, 475], bend: 38 },
  { from: [260, 514], to: [558, 477] },
  { from: [252, 115], to: [333, 115], exec: true },
  { from: [575, 115], to: [629, 115], exec: true },
  { from: [807, 115], to: [894, 115], exec: true },
  { from: [1019, 115], to: [1104, 117], exec: true },
  { from: [255, 283], to: [333, 283], exec: true },
  { from: [511, 283], to: [573, 283], exec: true },
  { from: [260, 451], to: [320, 451], exec: true },
  { from: [497, 451], to: [558, 453], exec: true },
  { from: [702, 453], to: [800, 447], exec: true },
];

const startupWires: Wire[] = [
  { from: [154, 119], to: [199, 119], exec: true },
  { from: [301, 119], to: [359, 119], exec: true },
  { from: [301, 147], to: [359, 263], bend: 62, exec: true },
  { from: [301, 175], to: [359, 407], bend: 95, exec: true },
];

function LoadingGraph() {
  return (
    <>
      <div className="absolute inset-x-0 top-[134px] h-[2px] bg-black" />
      <Wires wires={loadingWires} />
      {[339, 829, 885, 1039].map((x) => (
        <Reroute key={x} x={x} y={72} />
      ))}
      <GraphNode x={57} y={80} width={204} height={73} tone="event" icon={<EventDiamond />} title="Event Show Loading Screen" delegate outputs={[execIn, data("Initial Task")]} />
      <GraphNode
        x={57}
        y={164}
        width={222}
        height={53}
        tone="pure"
        icon={<FuncGlyph color="#9be28f" />}
        title="Get Player Controller"
        inputs={[{ kind: "data", label: "Player Index", color: GREEN, value: "0" }]}
        outputs={[data("Return Value")]}
      />
      <GraphNode
        x={324}
        y={80}
        width={261}
        height={112}
        tone="call"
        icon={<ClassBox className="h-[13px] w-[14px]" />}
        title="Create WBP Loading Screen Widget"
        badge
        inputs={[execIn, { kind: "data", label: "Class", color: PURPLE, asset: "WBP Loading Scre" }, data("Owning Player")]}
        outputs={[execIn, data("Return Value")]}
      />
      <SetNode x={618} y={94} width={200} height={60} inputs={[execIn, data("Loading Screen Widget")]} outputs={[execIn, data()]} />
      <SetNode x={884} y={94} width={146} height={83} inputs={[execIn, data("Active Task"), data("Target")]} outputs={[execIn, data(undefined, false)]} />
      <GraphNode
        x={1093}
        y={66}
        width={163}
        height={132}
        tone="call"
        icon={<FuncGlyph color="#7cc4f4" />}
        title="Add to Viewport"
        subtitle="Target is User Widget"
        badge
        inputs={[execIn, data("Target"), { kind: "data", label: "ZOrder", color: GREEN, value: "1000" }]}
        outputs={[execOpen]}
        footer={
          <button type="button" aria-label="Show advanced pins" className="mx-auto mt-[11px] block">
            <svg viewBox="0 0 10 7" className="h-[7px] w-[10px]" aria-hidden="true">
              <path d="M5 0l5 7H0z" fill="#cfcfcf" />
            </svg>
          </button>
        }
      />
      <GraphNode x={15} y={248} width={249} height={73} tone="event" icon={<EventDiamond />} title="Event Update Loading Screen Status" delegate outputs={[execIn, data("New Task")]} />
      <GraphNode x={324} y={248} width={195} height={74} tone="flow" icon={<QuestionGlyph />} title="Is Valid" inputs={isValidInputs} outputs={isValidOutputs} />
      <SetNode x={562} y={262} width={146} height={83} inputs={[execIn, data("Active Task"), data("Target")]} outputs={[execOpen, data(undefined, false)]} />
      <GetNode x={113} y={346} label="Loading Screen Widget" />
      <GraphNode x={71} y={416} width={198} height={49} tone="event" icon={<EventDiamond />} title="Event Hide Loading Screen" delegate outputs={[execIn]} />
      <GraphNode x={310} y={416} width={195} height={74} tone="flow" icon={<QuestionGlyph />} title="Is Valid" inputs={isValidInputs} outputs={isValidOutputs} />
      <GraphNode
        x={548}
        y={402}
        width={163}
        height={88}
        tone="call"
        icon={<FuncGlyph color="#7cc4f4" />}
        title="Remove from Parent"
        subtitle="Target is Widget"
        inputs={[execIn, data("Target")]}
        outputs={[execIn]}
      />
      <GetNode x={113} y={500} label="Loading Screen Widget" />
    </>
  );
}

const tasks = [
  { y: 79, title: "Enqueue GMT Auto Login Task", asset: "GMT Auto Login" },
  { y: 223, title: "Enqueue GMT Create Party Task", asset: "GMT Create Part" },
  { y: 367, title: "Enqueue GMT Load Main Menu Task", asset: "GMT Load Main I" },
];

function StartupGraph() {
  return (
    <>
      <div className="absolute inset-x-0 top-[13px] h-[2px] bg-black" />
      <Wires wires={startupWires} />
      <GraphNode
        big
        x={28}
        y={63}
        width={138}
        height={72}
        tone="event"
        icon={<EventDiamond custom size="h-[15px] w-[15px]" />}
        title="Start"
        subtitle="Custom Event"
        delegate
        outputs={[execIn]}
      />
      <GraphNode
        big
        x={188}
        y={79}
        width={125}
        height={140}
        tone="flow"
        icon={<SequenceGlyph />}
        title="Sequence"
        inputs={[execIn]}
        outputs={["Then 0", "Then 1", "Then 2"].map((label) => ({ kind: "exec" as const, label, filled: true }))}
        footer={
          <button type="button" className="mt-2 mr-[11px] ml-auto flex h-[22px] items-center gap-[7px] text-[12px]">
            Add pin
            <Plus />
          </button>
        }
      />
      {tasks.map((t) => (
        <GraphNode
          key={t.title}
          big
          x={348}
          y={t.y}
          width={300}
          height={132}
          tone="call"
          icon={<ClassBox className="h-[15px] w-[15px]" />}
          title={t.title}
          inputs={[execIn, { kind: "data", label: "Class", color: PURPLE, asset: t.asset }, { kind: "data", label: "Show Loading Screen", color: RED, check: true }]}
          outputs={[execOpen, data("Return Value", false)]}
        />
      ))}
    </>
  );
}

/* ---------- windows ---------- */

const WINDOW = "absolute flex flex-col overflow-hidden bg-[#222222]";

type EditorBodyProps = {
  sidebar: React.ReactNode;
  sidebarTab: React.ReactNode;
  sidebarWidth: string;
  highlight?: boolean;
  debug?: boolean;
  asset: string;
  gridClass: string;
  children: React.ReactNode;
};

function EditorBody({ sidebar, sidebarTab, sidebarWidth, highlight, debug, asset, gridClass, children }: EditorBodyProps) {
  return (
    <div className="flex min-h-0 flex-1 gap-[5px]">
      <aside className={`flex shrink-0 flex-col ${sidebarWidth}`}>
        <div className="flex h-[23px] shrink-0 items-end">{sidebarTab}</div>
        <div className="flex flex-1 flex-col overflow-hidden bg-[#3e3e3e] pt-[6px] pr-[2px]">{sidebar}</div>
      </aside>
      <main className="flex min-w-0 flex-1 flex-col">
        <div className="flex h-[23px] shrink-0 items-end pl-1">
          <PanelTab icon={<ToolsIcon />} label="Toolbar" className="w-[150px] pl-[6px]" />
        </div>
        <Toolbar debug={debug} />
        <div className="flex h-[27px] shrink-0 items-end pl-1">
          <PanelTab icon={<GraphIcon className="h-[14px] w-[16px]" />} label="Event Graph" className="w-[150px] pl-[6px]" highlight={highlight} />
        </div>
        <div className={`relative flex-1 overflow-hidden border-t-2 border-l-2 border-[#3e3e3e] bg-[#262626] ${gridClass}`}>
          <div className="absolute inset-0 shadow-[inset_0_0_28px_6px_rgba(0,0,0,0.3)]" />
          {children}
          <Breadcrumb asset={asset} />
        </div>
      </main>
    </div>
  );
}

function MomLoadingScreenWindow() {
  return (
    <section className={`${WINDOW} top-[17px] right-[400px] bottom-[391px] left-[17px]`}>
      <div className="flex h-[24px] shrink-0 items-center bg-[#1f1f1f]">
        <UnrealMark />
        <WindowTab label="MomLoadingScreen" icon={<RingIcon />} active className="ml-[13px] h-[24px] w-[209px] pr-[19px] pb-1 pl-4" />
      </div>
      <MenuBar />
      <EditorBody
        asset="MomLoadingScreen"
        debug
        sidebarWidth="w-[89px]"
        sidebarTab={<PanelTab icon={<BookIcon />} label="My Blu" className="w-[84px] pl-[5px]" />}
        gridClass="bg-[linear-gradient(90deg,#161616_2px,transparent_2px),linear-gradient(#161616_2px,transparent_2px),linear-gradient(90deg,#343434_2px,transparent_2px),linear-gradient(#343434_2px,transparent_2px)] bg-size-[112px_112px,112px_112px,14px_14px,14px_14px] bg-position-[69px_0,0_22px,13px_0,0_8px]"
        sidebar={
          <>
            <div className="mb-2 flex items-center">
              <AddNewButton />
              <Loupe color="#151515" className="ml-[3px] h-[14px] w-[14px]" />
            </div>
            <SectionHeader label="Graphs" open />
            <div className="pt-px pb-px">
              <TreeRoot label="EventGra" />
              <TreeLeaf label="Event S" />
              <TreeLeaf label="Event U" />
              <TreeLeaf label="Event H" />
            </div>
            <div className="flex flex-col gap-[2px]">
              <SectionHeader label="Functions" />
              <SectionHeader label="Macros" />
              <SectionHeader label="Variables" open />
              <div className="flex h-[20px] items-center pr-[4px] pl-[6px] text-[13px] text-[#bdbdbd]">
                <svg viewBox="0 0 16 14" className="h-[14px] w-[16px] shrink-0" aria-hidden="true">
                  <path d="M4.500 7L.8 3.200C-.4 1 3 0 4.500 2 6 0 9.400 1 8.200 3.200z" fill="#0f83bd" />
                  <path d="M7 6.500h9M1 11h14" stroke="#0f83bd" strokeWidth="2" />
                </svg>
                <span className="ml-[4px] min-w-0 flex-1 overflow-hidden whitespace-nowrap">Loadir</span>
                <button type="button" aria-label="Toggle visibility" className="flex h-[16px] w-[16px] items-center justify-center rounded-[2px] bg-[#5c5c5c]">
                  <svg viewBox="0 0 14 6" className="h-[6px] w-[14px]" aria-hidden="true">
                    <path d="M0 1.500c4 3.500 10 3.500 14 0" fill="none" stroke="#141414" strokeWidth="1.300" />
                  </svg>
                </button>
              </div>
              <SectionHeader label="Event Disp" />
            </div>
          </>
        }
      >
        <LoadingGraph />
      </EditorBody>
    </section>
  );
}

function StartupManagerWindow() {
  return (
    <section
      className={`${WINDOW} top-[399px] right-[27px] bottom-[27px] left-[857px] shadow-[5px_5px_8px_7px_rgba(0,0,0,0.88)]`}
    >
      <div className="flex h-[27px] shrink-0 items-center bg-[repeating-linear-gradient(135deg,#1b1b1b_0,#1b1b1b_16px,#242424_16px,#242424_32px)]">
        <UnrealMark />
        <WindowTab label="MainMenu" closable={false} className="z-10 ml-[15px] h-[26px] w-[204px] pl-[16px]" />
        <WindowTab
          label="Find in Blueprints"
          icon={<Magnifier className="h-[15px] w-[15px] shrink-0" />}
          className="-ml-[9px] h-[25px] w-[192px] pr-[10px] pl-[12px]"
        />
        <WindowTab label="StartupManager" icon={<RingIcon />} active className="z-10 -ml-[11px] h-[25px] w-[209px] pr-[18px] pl-4" />
      </div>
      <MenuBar />
      <EditorBody
        asset="StartupManager"
        highlight
        sidebarWidth="w-[226px]"
        sidebarTab={<PanelTab icon={<BookIcon />} label="My Blueprint" className="w-[149px] pl-[5px]" />}
        gridClass="bg-[linear-gradient(90deg,#161616_2px,transparent_2px),linear-gradient(#161616_2px,transparent_2px),linear-gradient(90deg,#343434_2px,transparent_2px),linear-gradient(#343434_2px,transparent_2px)] bg-size-[128px_128px,128px_128px,16px_16px,16px_16px] bg-position-[58px_0,0_13px,10px_0,0_13px]"
        sidebar={
          <>
            <div className="mb-2 flex items-center">
              <AddNewButton />
              <div className="relative ml-[3px] flex items-center">
                <input type="search" aria-label="Search" placeholder="Search" className="h-[19px] w-[94px] rounded-[2px] bg-[#c6c6c6] pl-[5px] text-[12px] text-black placeholder:text-[#7b7b7b]" />
                <Loupe color="#111" className="pointer-events-none absolute right-[1px] h-[15px] w-[15px]" />
              </div>
              <button type="button" aria-label="View options" className="ml-[6px] flex items-center text-white">
                <svg viewBox="0 0 17 11" className="h-[11px] w-[17px]" aria-hidden="true">
                  <path d="M0 5.500C4-.5 13-.5 17 5.500 13 11.500 4 11.500 0 5.500z" fill="#c9c9c9" />
                  <circle cx="8.500" cy="5" r="3.500" fill="#5f7494" />
                  <circle cx="8.500" cy="5" r="1.500" fill="#dfe6f0" />
                </svg>
                <Caret className="ml-[4px] h-[5px] w-[8px] drop-shadow-[0_1px_0_#000]" />
              </button>
            </div>
            <SectionHeader label="Graphs" open />
            <div className="pt-px pb-px">
              <TreeRoot label="EventGraph" />
              <TreeLeaf label="On Game Start" custom />
              <TreeLeaf label="Start" custom />
            </div>
            <div className="flex flex-col gap-[2px]">
              <SectionHeader label="Functions" note="(1 Overridable)" />
              <SectionHeader label="Macros" />
              <SectionHeader label="Variables" />
              <SectionHeader label="Event Dispatchers" />
            </div>
          </>
        }
      >
        <StartupGraph />
      </EditorBody>
    </section>
  );
}

export default function App() {
  return (
    <div className="relative min-h-screen overflow-hidden bg-white font-['Roboto',sans-serif]">
      <div className="absolute top-[17px] right-[400px] bottom-[391px] left-[17px] shadow-[5px_5px_8px_7px_rgba(0,0,0,0.88)]" />
      <MomLoadingScreenWindow />
      <StartupManagerWindow />
    </div>
  );
}
